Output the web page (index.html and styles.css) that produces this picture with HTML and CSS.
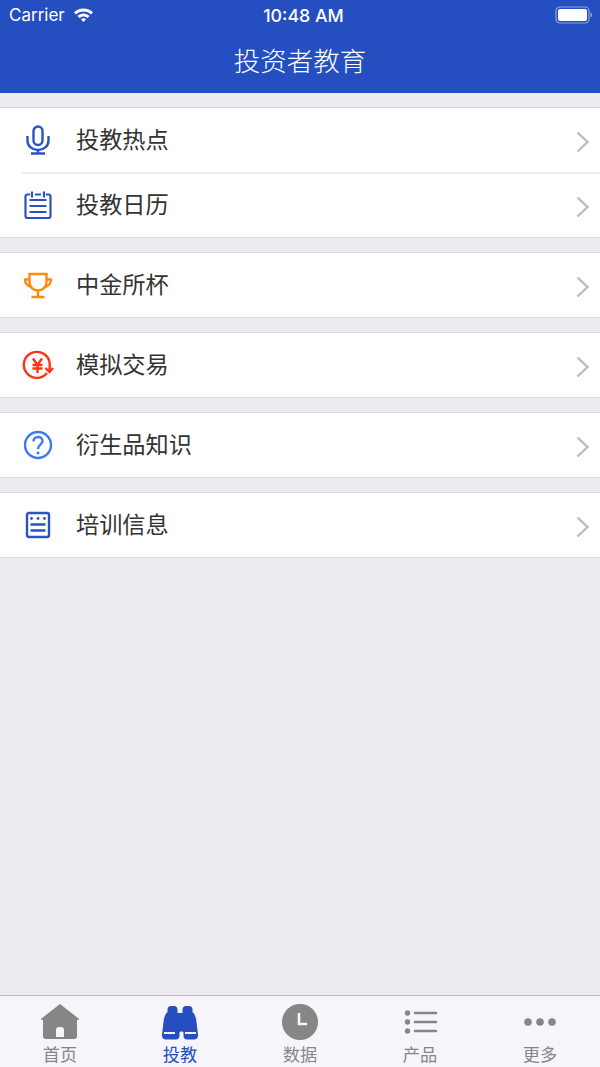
FILE: index.html
```html
<!DOCTYPE html>
<html lang="zh-CN">
  <head>
    <meta charset="UTF-8" />
    <meta name="viewport" content="width=device-width, initial-scale=1.0" />
    <title>投资者教育</title>
    <link rel="stylesheet" href="styles.css">
  </head>
  <body>
    <div class="app">
      <header class="top-bar">
        <div class="status-bar">
          <div class="status-left">
            <span>Carrier</span>
            <svg class="wifi" width="21" height="16" viewBox="0 0 21 15">
              <path d="M10.5 1C6.8 1 3.4 2.4 1 4.8l2 2.1C4.9 5 7.6 3.9 10.5 3.9s5.6 1.1 7.5 3l2-2.1C17.6 2.4 14.2 1 10.5 1z" fill="#fff"/>
              <path d="M10.5 6C8.2 6 6 6.9 4.5 8.4l2 2.1c1-1 2.5-1.6 4-1.6s3 .6 4 1.6l2-2.1C15 6.9 12.8 6 10.5 6z" fill="#fff"/>
              <path d="M10.5 10.7c-1 0-1.8.4-2.5 1l2.5 2.8 2.5-2.8c-.7-.6-1.5-1-2.5-1z" fill="#fff"/>
            </svg>
          </div>
          <div class="status-time">10:48 AM</div>
          <div class="status-right">
            <svg width="38" height="18" viewBox="0 0 38 18">
              <rect x="1" y="1" width="33" height="16" rx="4" fill="none" stroke="#8ea4e0" stroke-width="1.2"/>
              <rect x="3" y="3" width="29" height="12" rx="2" fill="#fff"/>
              <path d="M35.5 6.5c1 .3 1.5 1.2 1.5 2.5s-.5 2.200-1.500 2.500z" fill="#8ea4e0"/>
            </svg>
          </div>
        </div>
        <h1 class="page-title">投资者教育</h1>
      </header>

      <main class="content">
        <section class="group">
          <a class="row">
            <svg class="row-icon" width="32" height="32" viewBox="0 0 32 32" fill="none" stroke="#2a52c4" stroke-width="2.4">
              <rect x="11.5" y="2.5" width="9" height="18.5" rx="4.5"/>
              <path d="M5.5 12v4.500c0 5.800 4.700 9.500 10.500 9.500s10.500-3.700 10.500-9.500V12"/>
              <path d="M16 26v4M9 29.5h14"/>
            </svg>
            <span class="row-label">投教热点</span>
            <svg class="chevron" width="14" height="22" viewBox="0 0 14 22"><path d="M1.5 1.5l10 9.5-10 9.5" fill="none" stroke="#bcbcc1" stroke-width="2.4"/></svg>
          </a>
          <div class="row-line"></div>
          <a class="row">
            <svg class="row-icon" width="32" height="32" viewBox="0 0 32 32" fill="none" stroke="#2a52c4" stroke-width="2.2">
              <path d="M8 5.5H5.5a2 2 0 0 0-2 2v19.500a2 2 0 0 0 2 2h21a2 2 0 0 0 2-2V7.500a2 2 0 0 0-2-2H24M13 5.5h6"/>
              <path d="M10 2.5v6M22 2.5v6M7.500 11h17M7.500 17h17M7.500 23h17"/>
            </svg>
            <span class="row-label">投教日历</span>
            <svg class="chevron" width="14" height="22" viewBox="0 0 14 22"><path d="M1.5 1.5l10 9.5-10 9.5" fill="none" stroke="#bcbcc1" stroke-width="2.4"/></svg>
          </a>
        </section>

        <section class="group">
          <a class="row">
            <svg class="row-icon" width="32" height="32" viewBox="0 0 32 32" fill="none" stroke="#ff8a12" stroke-width="2.4">
              <path d="M7.5 5h17v8c0 4.800-3.800 8.500-8.500 8.500s-8.500-3.700-8.500-8.500z"/>
              <path d="M7.5 10.500H3c0 4 2 6.500 7 8M24.500 10.500H29c0 4-2 6.500-7 8"/>
              <path d="M16 21.5v6.500M9.500 28h13"/>
            </svg>
            <span class="row-label">中金所杯</span>
            <svg class="chevron" width="14" height="22" viewBox="0 0 14 22"><path d="M1.5 1.5l10 9.5-10 9.5" fill="none" stroke="#bcbcc1" stroke-width="2.4"/></svg>
          </a>
        </section>

        <section class="group">
          <a class="row">
            <svg class="row-icon" width="32" height="32" viewBox="0 0 32 32" fill="none" stroke="#ff3213" stroke-width="2.4">
              <g transform="translate(0 -1.5)">
                <path d="M25 25.500A13 13 0 1 1 27.500 14.500c.3 2.500.3 5 0 8"/>
                <path d="M23.500 20.500l4 4 3.500-4"/>
                <path d="M11 11l4.500 6.500L20 11M10.500 17.500h10M10.500 21h10M15.500 17v8.500"/>
              </g>
            </svg>
            <span class="row-label">模拟交易</span>
            <svg class="chevron" width="14" height="22" viewBox="0 0 14 22"><path d="M1.5 1.5l10 9.5-10 9.500" fill="none" stroke="#bcbcc1" stroke-width="2.4"/></svg>
          </a>
        </section>

        <section class="group">
          <a class="row">
            <svg class="row-icon" width="32" height="32" viewBox="0 0 32 32" fill="none" stroke="#3f78f5" stroke-width="2.4">
              <circle cx="16" cy="16" r="13"/>
              <path d="M11.5 12.500c0-2.700 2-4.500 4.600-4.500s4.400 1.700 4.400 4c0 3.700-4.500 3.800-4.500 8"/>
              <circle cx="16" cy="24" r="1.5" fill="#3f78f5" stroke="none"/>
            </svg>
            <span class="row-label">衍生品知识</span>
            <svg class="chevron" width="14" height="22" viewBox="0 0 14 22"><path d="M1.5 1.5l10 9.5-10 9.500" fill="none" stroke="#bcbcc1" stroke-width="2.4"/></svg>
          </a>
        </section>

        <section class="group">
          <a class="row">
            <svg class="row-icon" width="32" height="32" viewBox="0 0 32 32" fill="none" stroke="#2a52c4" stroke-width="2.4">
              <rect x="5" y="4" width="22" height="24" rx="2"/>
              <path d="M8.5 15.500h15M8.500 21.500h15"/>
              <circle cx="9.5" cy="9.5" r="1.4" fill="#2a52c4" stroke="none"/>
              <circle cx="16" cy="9.5" r="1.4" fill="#2a52c4" stroke="none"/>
              <circle cx="22.5" cy="9.5" r="1.4" fill="#2a52c4" stroke="none"/>
            </svg>
            <span class="row-label">培训信息</span>
            <svg class="chevron" width="14" height="22" viewBox="0 0 14 22"><path d="M1.5 1.5l10 9.5-10 9.500" fill="none" stroke="#bcbcc1" stroke-width="2.4"/></svg>
          </a>
        </section>
      </main>

      <nav class="tab-bar">
        <a class="tab">
          <svg width="40" height="36" viewBox="0 0 40 36">
            <path fill-rule="evenodd" d="M20 0L1.500 14.500c-.7.600-.4 1.500.5 1.500H3v16a3 3 0 0 0 3 3h28a3 3 0 0 0 3-3V16h1c.9 0 1.200-.9.500-1.500zM16 33v-7a3 3 0 0 1 3-3h2a3 3 0 0 1 3 3v7z" fill="#868686"/>
          </svg>
          <span>首页</span>
        </a>
        <a class="tab active">
          <svg width="40" height="36" viewBox="0 0 40 36">
            <path d="M7.500 8V5.500C7.500 3.500 9 2 11 2h3C16 2 17.500 3.500 17.500 5.500V9h5V5.500C22.500 3.500 24 2 26 2h3C31 2 32.500 3.500 32.500 5.500V8c2 1.500 3.500 5 4 10l1.500 13c.2 2.800-1.500 4.500-4 4.500h-7c-2 0-3.500-1.500-3.500-3.500v-3c0-1-.5-1.500-1.500-1.500h-1c-1 0-1.500.5-1.500 1.500v3c0 2-1.500 3.500-3.500 3.500H6c-2.500 0-4.200-1.700-4-4.500L3.500 18C4 13 5.500 9.500 7.500 8z" fill="#254ec0"/>
            <path d="M4 29h11M25 29h11" stroke="#f5f5fa" stroke-width="2.2" fill="none"/>
          </svg>
          <span>投教</span>
        </a>
        <a class="tab">
          <svg width="40" height="36" viewBox="0 0 40 36">
            <circle cx="20" cy="18" r="18" fill="#868686"/>
            <path d="M19 9v11h8" fill="none" stroke="#f5f5fa" stroke-width="2.6"/>
          </svg>
          <span>数据</span>
        </a>
        <a class="tab">
          <svg width="40" height="36" viewBox="0 0 40 36">
            <circle cx="7.5" cy="9" r="2.7" fill="#868686"/>
            <circle cx="7.5" cy="18" r="2.7" fill="#868686"/>
            <circle cx="7.5" cy="27" r="2.7" fill="#868686"/>
            <path d="M15 9h21M15 18h21M15 27h21" stroke="#868686" stroke-width="2.6" stroke-linecap="round" fill="none"/>
          </svg>
          <span>产品</span>
        </a>
        <a class="tab">
          <svg width="40" height="36" viewBox="0 0 40 36">
            <circle cx="8" cy="18" r="3.8" fill="#868686"/>
            <circle cx="20" cy="18" r="3.8" fill="#868686"/>
            <circle cx="32" cy="18" r="3.8" fill="#868686"/>
          </svg>
          <span>更多</span>
        </a>
      </nav>
    </div>
  </body>
</html>
```

FILE: styles.css
```css
* {
  box-sizing: border-box;
}
body {
  margin: 0;
  font-family: "Noto Sans CJK SC", "Noto Sans", sans-serif;
}
.app {
  display: flex;
  flex-direction: column;
  height: 1067px;
  background-color: #ebebf1;
  overflow: hidden;
}
.top-bar {
  height: 93px;
  background-color: #254ec0;
  color: white;
}
.status-bar {
  display: grid;
  grid-template-columns: 1fr auto 1fr;
  align-items: center;
  height: 30px;
  padding: 0 7px 0 9px;
  font-family: Inter, "Liberation Sans", sans-serif;
  font-size: 17px;
}
.status-left {
  display: flex;
  align-items: center;
  gap: 8px;
}
.status-time {
  margin-left: 5px;
  font-size: 17.8px;
  font-weight: 500;
}
.status-right {
  display: flex;
  justify-content: flex-end;
}
.page-title {
  margin: 0;
  height: 63px;
  line-height: 59px;
  text-align: center;
  font-size: 26.5px;
  font-weight: 300;
}
.content {
  flex: 1;
  padding-top: 14px;
}
.group {
  margin-bottom: 14px;
  background-color: white;
  border-top: 1px solid #d9d9dd;
  border-bottom: 1px solid #d9d9dd;
}
.row {
  display: flex;
  align-items: center;
  height: 64px;
  padding: 0 10px 0 22px;
  color: #333;
}
.row-line {
  height: 2px;
  margin-bottom: -1px;
  margin-left: 22px;
  background-color: #ececee;
}
.row-icon {
  flex: none;
}
.row-label {
  flex: 1;
  margin-left: 22px;
  padding-bottom: 4px;
  font-size: 23.2px;
}
.chevron {
  flex: none;
  margin-top: 3px;
}
.tab-bar {
  display: flex;
  height: 72px;
  background-color: #f5f5fa;
  border-top: 1px solid #bdbdc1;
}
.tab {
  display: flex;
  flex: 1;
  flex-direction: column;
  align-items: center;
  padding-top: 8px;
  color: #868686;
  font-size: 17.2px;
  line-height: 22px;
}
.tab span {
  margin-top: 3px;
}
.tab.active {
  color: #254ec0;
}
```
